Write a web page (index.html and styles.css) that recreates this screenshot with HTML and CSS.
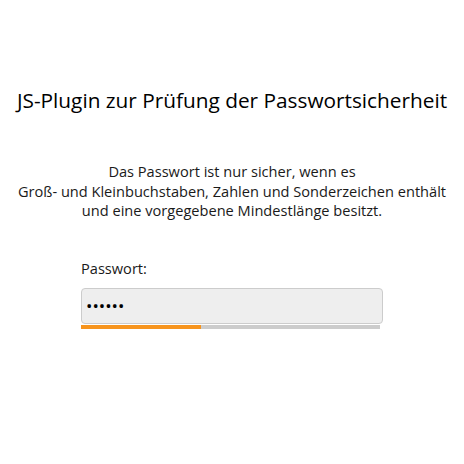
FILE: index.html
```html
<!DOCTYPE html>
<html lang="de">
<head>
<meta charset="utf-8">
<title>JS-Plugin</title>
<link rel="stylesheet" href="styles.css">
</head>
<body>
<main class="page">
  <h1 class="title">JS-Plugin zur Prüfung der Passwortsicherheit</h1>
  <p class="intro">Das Passwort ist nur sicher, wenn es<br>Groß- und Kleinbuchstaben, Zahlen und Sonderzeichen enthält<br>und eine vorgegebene Mindestlänge besitzt.</p>
  <form class="form">
    <label class="label" for="pw">Passwort:</label>
    <input class="input" id="pw" type="password" value="123456">
    <div class="meter"><div class="meter-fill" style="width:40%"></div></div>
  </form>
</main>
</body>
</html>
```

FILE: styles.css
```css
html, body {
  margin: 0;
  padding: 0;
  background: #fff;
}
body {
  font-family: "Open Sans", sans-serif;
  color: #111;
}
.page {
  display: flex;
  flex-direction: column;
  align-items: center;
  padding-top: 86px;
}
.title {
  margin: 0;
  font-size: 20.8px;
  font-weight: 500;
  line-height: 28px;
  color: #000;
}
.intro {
  margin: 48px 0 0;
  font-size: 14.6px;
  line-height: 19.5px;
  text-align: center;
  color: #1a1a1a;
}
.form {
  margin-top: 37px;
  width: 302px;
  display: flex;
  flex-direction: column;
}
.label {
  font-size: 14.6px;
  line-height: 20px;
  color: #1a1a1a;
}
.input {
  margin-top: 10px;
  box-sizing: border-box;
  width: 302px;
  height: 36px;
  border: 1px solid #ccc;
  border-radius: 4px;
  background: #eee;
  padding: 0 4px;
  font-size: 17px;
  font-family: "Open Sans", sans-serif;
  color: #000;
}
.meter {
  width: 299px;
  height: 4px;
  margin-top: 1px;
  background: #ccc;
}
.meter-fill {
  height: 100%;
  background: #f7941d;
}
```
